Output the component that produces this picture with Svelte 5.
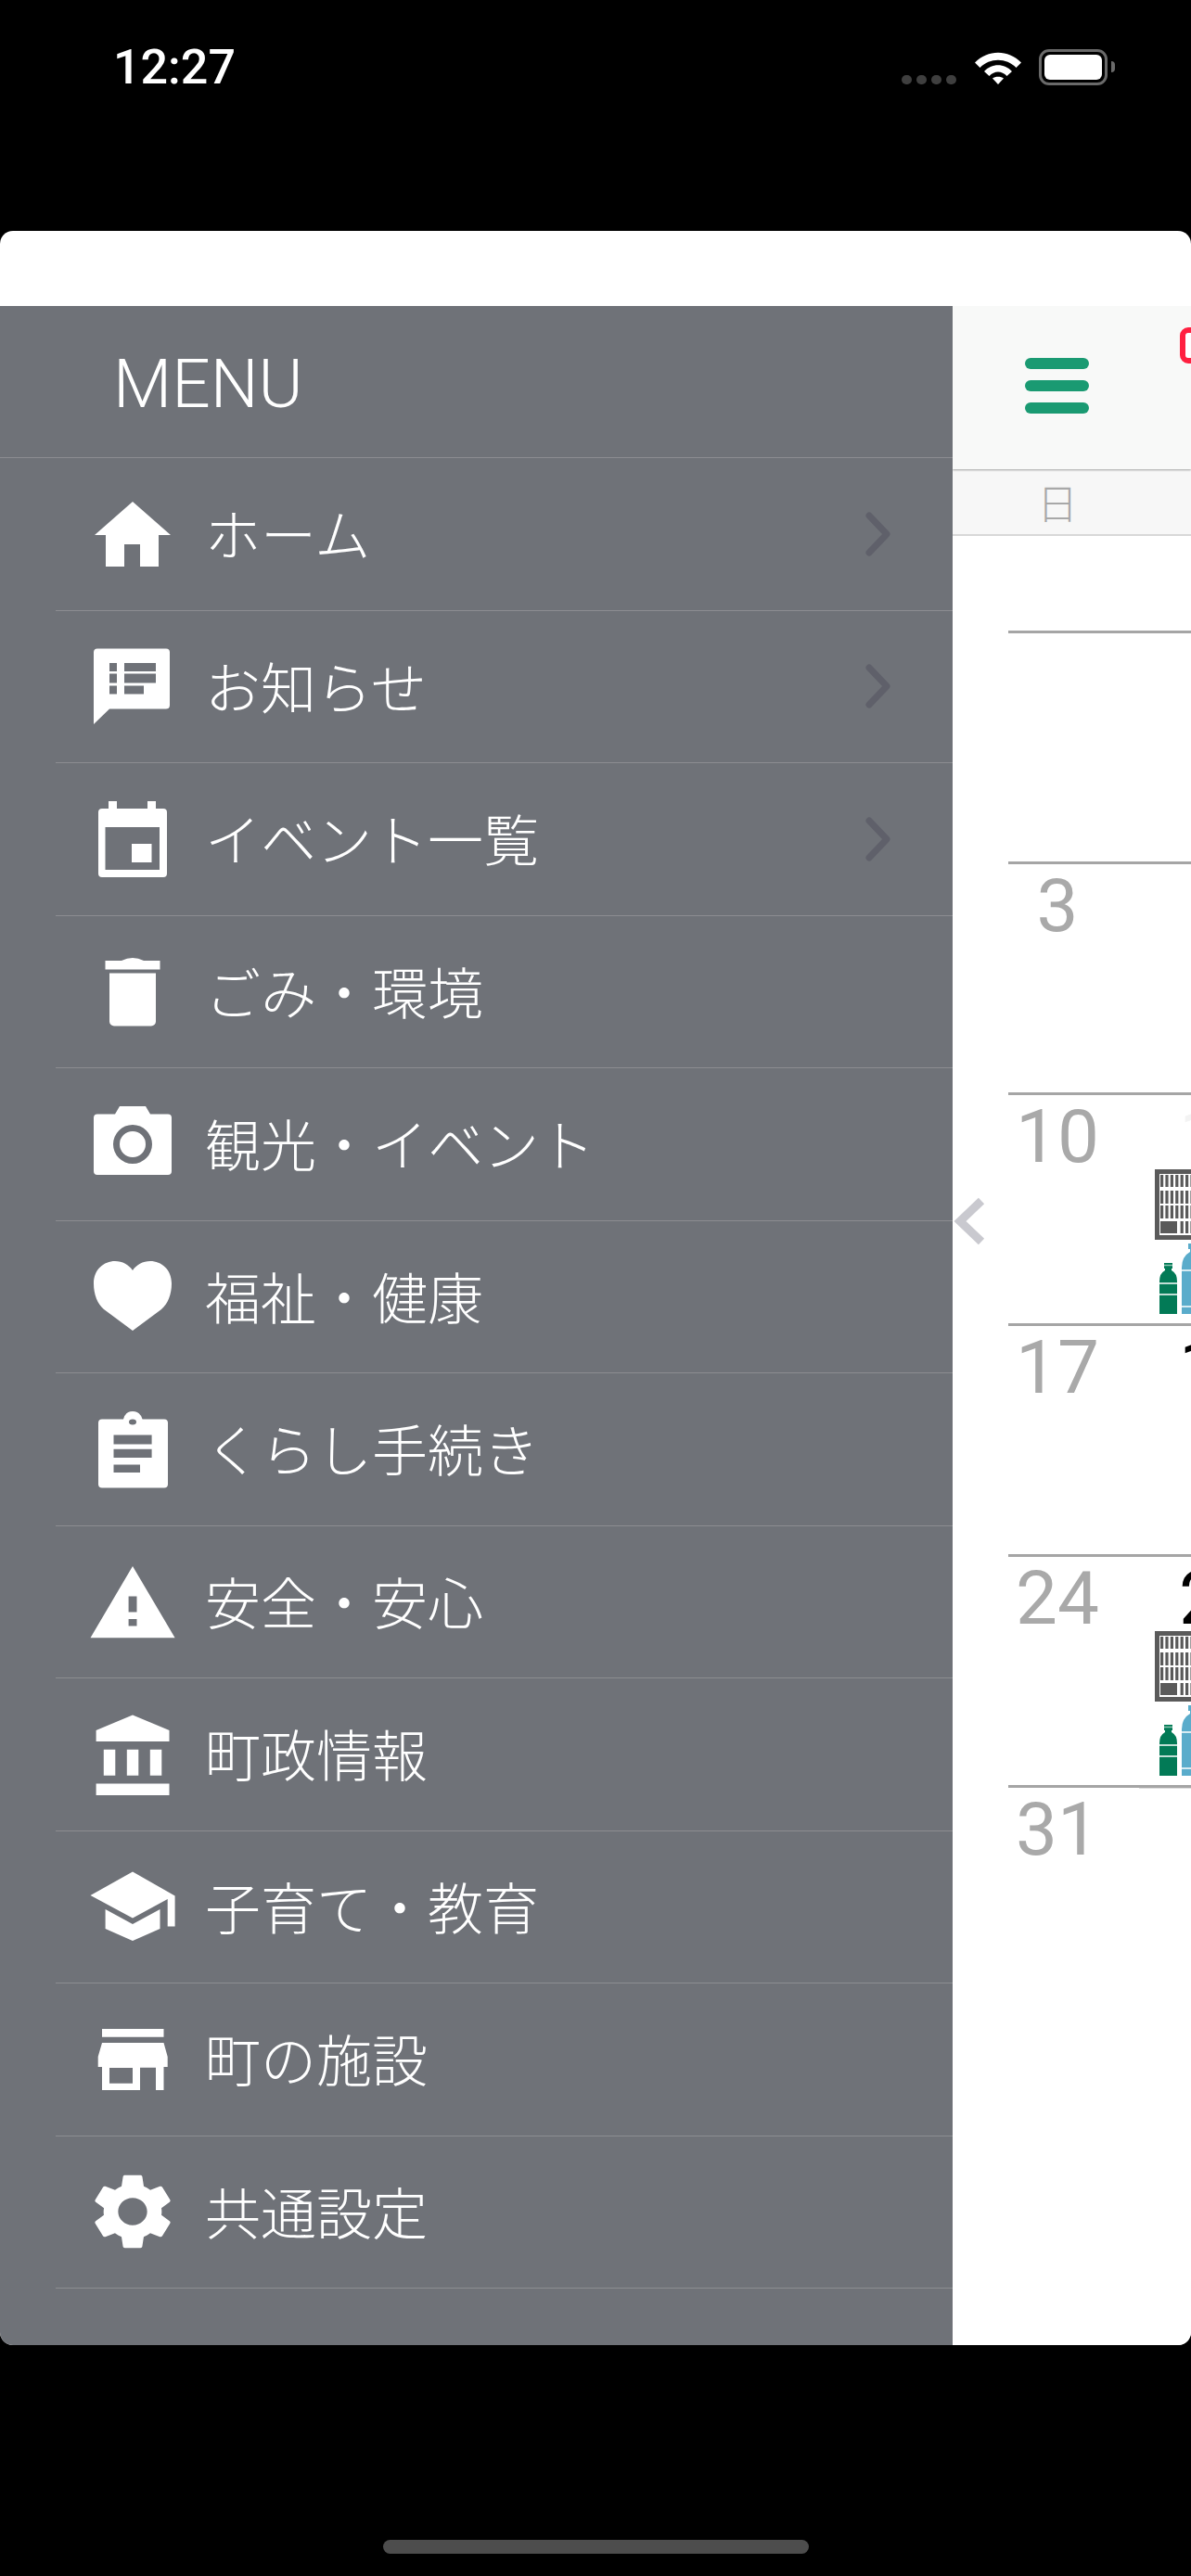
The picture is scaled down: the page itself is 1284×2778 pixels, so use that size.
<script>
  const items = [
    { label: "ホーム", arrow: true, d: "M48 13L89 49H76V83H56V59H39V83H19V49H7Z" },
    { label: "お知らせ", arrow: true, d: "M10 7.5H84a4 4 0 0 1 4 4V68.5a4 4 0 0 1-4 4H23L6 89V11.5a4 4 0 0 1 4-4ZM23 23V32H31V23ZM39 23V32H73V23ZM23 34.5V44.5H31V34.5ZM39 34.5V44.5H73V34.5ZM23 47.5V56.5H31V47.5ZM39 47.5V56.5H60V47.5Z" },
    { label: "イベント一覧", arrow: true, d: "M22 7H31V15H64V7H73V15H81a4 4 0 0 1 4 4V85a4 4 0 0 1-4 4H15a4 4 0 0 1-4-4V19a4 4 0 0 1 4-4H22ZM18.5 35V81H77V35ZM47 53H68.5V73H47Z" },
    { label: "ごみ・環境", d: "M18.5 15H36Q48 9 60 15H77.5V24.5H18.5ZM23 28.5H73V80.5a5 5 0 0 1-5 5H28a5 5 0 0 1-5-5Z" },
    { label: "観光・イベント", d: "M10 15.5H29L34 7H62L67 15.5H86a4 4 0 0 1 4 4V77a4 4 0 0 1-4 4H10a4 4 0 0 1-4-4V19.5a4 4 0 0 1 4-4ZM27 48a21 21 0 1 0 42 0a21 21 0 1 0-42 0ZM34 48a14 14 0 1 1 28 0a14 14 0 1 1-28 0Z" },
    { label: "福祉・健康", d: "M48 85L17 62C10 56 6 46 6 34C6 19 17 10 29 10C37 10 44 14 48 20C52 14 59 10 67 10C79 10 90 19 90 34C90 46 86 56 79 62Z" },
    { label: "くらし手続き", d: "M15 15.6H38Q40 7 48 7Q56 7 58.6 15.6H82a4 4 0 0 1 4 4V85.6a4 4 0 0 1-4 4H15a4 4 0 0 1-4-4V19.6a4 4 0 0 1 4-4ZM44 18.6a4 3 0 1 0 8 0a4 3 0 1 0-8 0ZM27.5 32.4V42.6H68.6V32.4ZM27.5 47.8V57H68.6V47.8ZM27.5 64.6V73H56V64.6Z" },
    { label: "安全・安心", d: "M48 10L93.6 87.3H2.5ZM43.6 42.5V59.5H52.5V42.5ZM43.6 67V74.6H52.5V67Z" },
    { label: "町政情報", d: "M48 5.5L87.5 22V34H8.6V22ZM16.8 42.7H29.3V70.8H16.8ZM41.8 42.7H54.3V70.8H41.8ZM66.8 42.7H79.3V70.8H66.8ZM8.6 79.5H87.5V92H8.6Z" },
    { label: "子育て・教育", d: "M48 10.5L93.6 36.5V69.5H85.7V40L48 60.5L2.5 36ZM18.6 51L48 67L77.5 51V72L48 85L18.6 72Z" },
    { label: "町の施設", d: "M15 15H81.5V23.7H15ZM15 30H81.5L85.7 45V56H81.5V81H73V56.7H56V81H15V56H10.7V45ZM23 57V73.7H48V57Z" },
    { label: "共通設定", gear: true, d: "M19.14 12.94c.04-.3.06-.61.06-.94 0-.32-.02-.64-.07-.94l2.03-1.58c.18-.14.23-.41.12-.61l-1.92-3.32c-.12-.22-.37-.29-.59-.22l-2.39.96c-.5-.38-1.03-.7-1.62-.94l-.36-2.54c-.04-.24-.24-.41-.48-.41h-3.84c-.24 0-.43.17-.47.41l-.36 2.54c-.59.24-1.13.57-1.62.94l-2.39-.96c-.22-.08-.47 0-.59.22L2.74 8.87c-.12.21-.08.47.12.61l2.03 1.58c-.05.3-.09.63-.09.94s.02.64.07.94l-2.03 1.58c-.18.14-.23.41-.12.61l1.92 3.32c.12.22.37.29.59.22l2.39-.96c.5.38 1.03.7 1.62.94l.36 2.54c.05.24.24.41.48.41h3.84c.24 0 .44-.17.47-.41l.36-2.54c.59-.24 1.13-.56 1.62-.94l2.39.96c.22.08.47 0 .59-.22l1.92-3.32c.12-.22.07-.47-.12-.61l-2.01-1.58zM12 15.6c-1.98 0-3.6-1.62-3.6-3.6s1.62-3.6 3.6-3.6 3.6 1.62 3.6 3.6-1.62 3.6-3.6 3.6z" },
  ];

  const weeks = [
    { sun: "", mon: "" },
    { sun: "3", mon: "" },
    { sun: "10", mon: "11", faint: true, garbage: true },
    { sun: "17", mon: "18" },
    { sun: "24", mon: "25", garbage: true },
    { sun: "31", mon: "", today: true },
  ];

  const barCols = Array.from({ length: 8 }, (_, i) => 6 + i * 5.4);
  const barRows = [
    [6, 13],
    [23, 14],
    [39, 14],
  ];
</script>

<div class="screen">
  <div class="status">
    <span class="time">12:27</span>
    <div class="status-icons">
      <div class="dots"><i></i><i></i><i></i><i></i></div>
      <svg class="wifi" width="50" height="37" viewBox="0 0 50 37">
        <path d="M0 13.5C14-1 36-1 50 13.5L44.5 19C34 8 16 8 5.500 19Z" fill="#fff" />
        <path d="M10 23C18 14 32 14 40 23L34.500 28C29 22 21 22 15.500 28Z" fill="#fff" />
        <path d="M19 30.500C22 28 28 28 31 30.500L25 37Z" fill="#fff" />
      </svg>
      <div class="battery"><div class="battery-fill"></div></div>
      <div class="battery-nub"></div>
    </div>
  </div>

  <div class="card">
    <div class="card-top"></div>
    <div class="split">
      <nav class="menu">
        <div class="menu-title">MENU</div>
        <ul>
          {#each items as item (item.label)}
            <li>
              <svg class="icon" width="96" height="96" viewBox="0 0 96 96">
                {#if item.gear}
                  <path d={item.d} fill="#fff" transform="translate(48 48) scale(4.35 4.08) translate(-12 -12)" />
                {:else}
                  <path d={item.d} fill="#fff" fill-rule="evenodd" />
                {/if}
              </svg>
              <span class="label">{item.label}</span>
              {#if item.arrow}
                <svg class="arrow" width="32" height="54" viewBox="0 0 32 54">
                  <path d="M7 7L26 27L7 47" fill="none" stroke="#5f606a" stroke-width="7" stroke-linecap="round" stroke-linejoin="round" />
                </svg>
              {/if}
            </li>
          {/each}
        </ul>
      </nav>

      <section class="calendar">
        <header class="cal-header">
          <div class="burger"><i></i><i></i><i></i></div>
          <div class="month-badge"></div>
        </header>
        <div class="weekdays"><span>日</span></div>
        <div class="prev-row"></div>
        {#each weeks as week}
          <div class="week">
            <div class="day sun">{week.sun}</div>
            <div class="day mon" class:today={week.today}>
              <div class="num" class:faint={week.faint}>{week.mon}</div>
              {#if week.garbage}
                <svg class="garbage" width="60" height="76" viewBox="0 0 60 76">
                  <rect x="2.500" y="2.500" width="90" height="71" fill="#fff" stroke="#5a5a5a" stroke-width="5" />
                  {#each barRows as row}
                    {#each barCols as x}
                      <rect {x} y={row[0]} width="3.200" height={row[1]} fill="#5a5a5a" />
                    {/each}
                  {/each}
                  <rect x="6" y="56" width="18" height="13" fill="#5a5a5a" />
                  {#each barCols.slice(4) as x}
                    <rect {x} y="56" width="3.200" height="13" fill="#5a5a5a" />
                  {/each}
                </svg>
                <svg class="bottles" width="60" height="76" viewBox="0 0 60 76">
                  <path d="M10 21H19V27H18V29Q24 32 24 41V76H5V41Q5 32 11 29V27H10Z" fill="#027a56" />
                  <path d="M5 43H24M5 55H24" stroke="#fff" stroke-width="1.300" />
                  <path d="M10 23.500H19" stroke="#8cc4b0" stroke-width="1.500" />
                  <path d="M36 0H50V6H48V9Q55 14 55 28V76H29V26Q29 14 38 9V6H36Z" fill="#5aaccb" />
                  <path d="M29 29H55M29 68H55" stroke="#fff" stroke-width="1.300" />
                </svg>
              {/if}
            </div>
          </div>
        {/each}
        <svg class="back" width="36" height="54" viewBox="0 0 36 54">
          <path d="M31 5L8 27L31 49" fill="none" stroke="#c9c9cf" stroke-width="9" />
        </svg>
      </section>
    </div>
  </div>

  <div class="bottom">
    <div class="home-bar"></div>
  </div>
</div>

<style>
  :global(body) {
    margin: 0;
    background: #000;
  }

  .screen {
    width: 1284px;
    height: 2778px;
    display: flex;
    flex-direction: column;
    background: #000;
    overflow: hidden;
    font-family: "Noto Sans CJK JP", "Noto Sans", sans-serif;
  }

  .status {
    height: 249px;
    flex-shrink: 0;
    display: flex;
    justify-content: space-between;
    align-items: flex-start;
    padding: 53px 82px 0 122px;
    box-sizing: border-box;
    color: #fff;
  }

  .time {
    font-family: Roboto, "Liberation Sans", sans-serif;
    font-size: 52px;
    font-weight: 500;
    line-height: 40px;
  }

  .status-icons {
    display: flex;
    align-items: flex-start;
  }

  .dots {
    display: flex;
    gap: 5px;
    margin: 28px 20px 0 0;
  }

  .dots i {
    width: 11px;
    height: 10px;
    border-radius: 5px;
    background: #3f3f3f;
  }

  .wifi {
    margin-top: 1px;
    margin-right: 19px;
  }

  .battery {
    width: 74px;
    height: 39px;
    box-sizing: border-box;
    border: 3px solid #6a6a6a;
    border-radius: 11px;
    padding: 3px;
  }

  .battery-fill {
    height: 100%;
    border-radius: 6px;
    background: #fff;
  }

  .battery-nub {
    width: 4px;
    height: 12px;
    margin: 13px 0 0 4px;
    border-radius: 0 4px 4px 0;
    background: #6a6a6a;
  }

  .card {
    height: 2280px;
    flex-shrink: 0;
    display: flex;
    flex-direction: column;
    background: #fff;
    border-radius: 14px;
    overflow: hidden;
  }

  .card-top {
    height: 81px;
    flex-shrink: 0;
  }

  .split {
    flex: 1;
    min-height: 0;
    display: flex;
  }

  .menu {
    width: 1027px;
    flex-shrink: 0;
    background: #6f7278;
    color: #fff;
  }

  .menu-title {
    height: 164px;
    box-sizing: border-box;
    border-bottom: 1px solid #8c8d91;
    padding-left: 122px;
    font-family: Roboto, "Liberation Sans", sans-serif;
    font-size: 73px;
    font-weight: 300;
    line-height: 168px;
  }

  ul {
    list-style: none;
    margin: 0;
    padding: 0;
  }

  li {
    height: 164.500px;
    box-sizing: border-box;
    margin-left: 60px;
    padding: 0 65px 0 35px;
    border-bottom: 1px solid #8c8d91;
    display: flex;
    align-items: center;
  }

  .icon {
    flex-shrink: 0;
    margin-right: 30px;
  }

  .label {
    font-size: 60px;
    font-weight: 300;
    line-height: 1;
    margin-bottom: 3px;
  }

  .arrow {
    margin-left: auto;
  }

  .calendar {
    flex: 1;
    min-width: 0;
    position: relative;
    overflow: hidden;
    background: #fff;
  }

  .cal-header {
    height: 176px;
    box-sizing: border-box;
    padding: 23px 0 0 78px;
    display: flex;
    align-items: flex-start;
    background: #f8f9f8;
    box-shadow: 0 1px 2px rgba(0, 0, 0, 0.35);
    position: relative;
  }

  .burger {
    display: flex;
    flex-direction: column;
    gap: 12px;
    margin-top: 33px;
    flex-shrink: 0;
  }

  .burger i {
    display: block;
    width: 69px;
    height: 12px;
    border-radius: 6px;
    background: #1a9a72;
  }

  .month-badge {
    width: 60px;
    height: 39px;
    flex-shrink: 0;
    box-sizing: border-box;
    margin-left: 98px;
    border: 6px solid #ff2040;
    border-radius: 9px;
    background: #fff;
  }

  .weekdays {
    height: 72px;
    box-sizing: border-box;
    background: #f7f7f7;
    border-bottom: 2px solid #d8d8d8;
    padding-left: 51px;
    display: flex;
    align-items: center;
  }

  .weekdays span {
    width: 124px;
    text-align: center;
    font-size: 44px;
    font-weight: 300;
    line-height: 1;
    color: #a8a8a8;
  }

  .prev-row {
    height: 102px;
  }

  .week {
    height: 249px;
    box-sizing: border-box;
    margin-left: 60px;
    border-top: 3px solid #a5a5a5;
    display: flex;
    font-family: Roboto, "Liberation Sans", sans-serif;
    font-size: 80px;
    font-weight: 400;
    line-height: 80px;
  }

  .day {
    flex-shrink: 0;
  }

  .sun {
    width: 106px;
    margin-right: 35px;
    padding-top: 5px;
    text-align: center;
    color: #a9a9a9;
  }

  .mon {
    width: 176px;
    padding-top: 5px;
    color: #000;
  }

  .mon.today {
    border-top: 1px solid #dcdcdc;
  }

  .num {
    height: 75px;
    text-align: center;
  }

  .num.faint {
    color: #f3f3f3;
  }

  .garbage,
  .bottles {
    display: block;
    margin-left: 17px;
  }

  .bottles {
    margin-top: 4px;
  }

  .back {
    position: absolute;
    left: 0;
    top: 960px;
  }

  .bottom {
    flex: 1;
    position: relative;
    display: flex;
    justify-content: center;
  }

  .home-bar {
    width: 459px;
    height: 15px;
    margin-top: 210px;
    border-radius: 8px;
    background: #4d4d4d;
  }
</style>
